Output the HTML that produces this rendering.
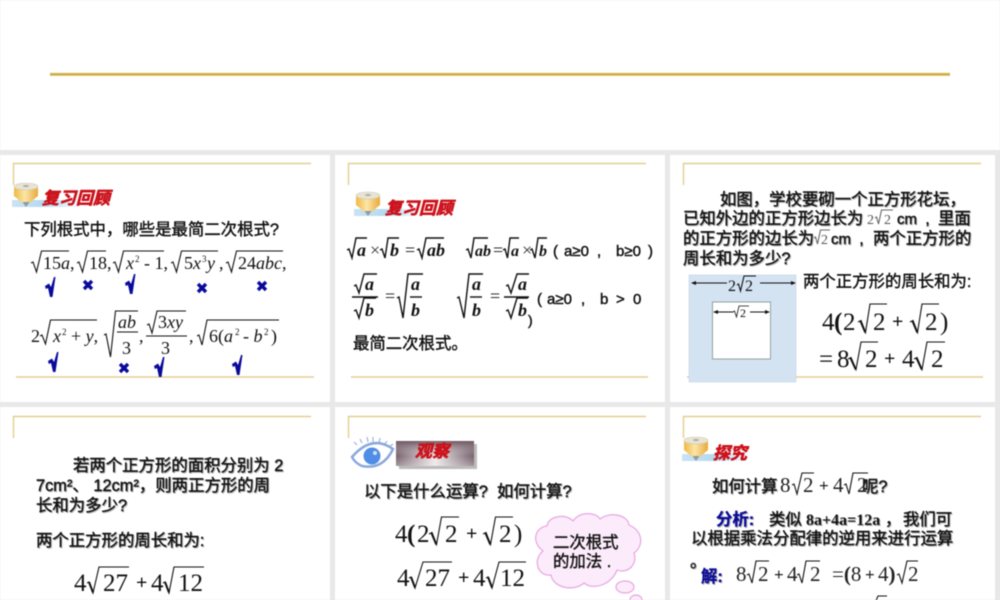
<!DOCTYPE html>
<html lang="zh">
<head>
<meta charset="utf-8">
<title>二次根式</title>
<style>
html,body{margin:0;padding:0;background:#e8e8e8;width:1000px;height:600px;overflow:hidden}
svg{display:block;filter:blur(.4px)}
text{white-space:pre}
.t{font:16.4px "Liberation Sans","Noto Sans CJK SC",sans-serif;fill:#111;stroke:#111;stroke-width:.4}
.l{font:15px "Liberation Sans",sans-serif;fill:#111;stroke:#111;stroke-width:.45}
.sh{filter:drop-shadow(1px 1px 0 #b5b5b5)}
.m{font:18px "Liberation Serif",serif;fill:#111}
.mi{font:italic 18px "Liberation Serif",serif;fill:#111}
.bi{font:italic bold 18px "Liberation Serif",serif;fill:#111}
.b{font:25px "Liberation Serif",serif;fill:#111}
.p{font:bold 20px "Liberation Serif",serif;fill:#111}
.p2{font:bold 17px "Liberation Serif",serif;fill:#222}
.s{font:italic 9px "Liberation Serif",serif;fill:#111}
.m20{font:21px "Liberation Serif",serif;fill:#222}
.r{fill:none;stroke:#111;stroke-width:1.1}
.rb{fill:none;stroke:#111;stroke-width:1.4}
.f{fill:none;stroke:#e4cd90;stroke-width:1.4}
.h{font:italic bold 17px "Liberation Sans","Noto Sans CJK SC",sans-serif;fill:#d0101a;stroke:#d0101a;stroke-width:.45;filter:drop-shadow(.8px .8px 0 #8a2025)}
.n{font:bold 16.4px "Liberation Sans","Noto Sans CJK SC",sans-serif;fill:#0a0a96;stroke:#0a0a96;stroke-width:.3}
.ck{fill:#0a0a9a}
.x{stroke:#0a0a9a;stroke-width:3.4;fill:none}
</style>
</head>
<body>
<svg width="1000" height="600" viewBox="0 0 1000 600" xmlns="http://www.w3.org/2000/svg">
<defs>
<linearGradient id="gold" x1="0" x2="1" y1="0" y2="0"><stop offset="0" stop-color="#f0b840"/><stop offset=".45" stop-color="#fbe6a8"/><stop offset="1" stop-color="#e9a93a"/></linearGradient>
<linearGradient id="sky" x1="0" x2="1" y1="0" y2="0"><stop offset="0" stop-color="#c9e3f4"/><stop offset=".5" stop-color="#b5d9f0"/><stop offset="1" stop-color="#f4fafd"/></linearGradient>
<linearGradient id="bx" x1="0" x2="1" y1="0" y2="0"><stop offset="0" stop-color="#5f4450"/><stop offset=".5" stop-color="#f6f3f4"/><stop offset="1" stop-color="#5f4450"/></linearGradient>
<linearGradient id="bxv" x1="0" x2="0" y1="0" y2="1"><stop offset="0" stop-color="#6d5560"/><stop offset=".6" stop-color="#d9d4d6" stop-opacity=".2"/><stop offset="1" stop-color="#e8e4e6" stop-opacity=".5"/></linearGradient>
<g id="pencil">
<rect x="-2" y="17" width="65" height="7" fill="url(#sky)"/>
<path d="M0 4 H24 V13 L12 23 L0 13 Z" fill="url(#gold)"/>
<ellipse cx="12" cy="3.5" rx="12" ry="3.5" fill="#e8e4d4" stroke="#cfc9b0" stroke-width=".6"/>
<ellipse cx="12" cy="3" rx="3" ry="1" fill="#aaa"/>
<path d="M8.5 19 H15.5 L12 24 Z" fill="#8a9aa6"/>
</g>
</defs>

<rect width="1000" height="600" fill="#e8e8e8"/>
<rect width="1000" height="150" fill="#fff"/>
<rect x="50" y="72.7" width="900" height="3.3" fill="#e6cf85"/>
<rect x="50" y="73.5" width="900" height="1.6" fill="#c6a63a"/>

<!-- panels -->
<rect x="0" y="155" width="330" height="247" fill="#fff"/>
<rect x="335" y="155" width="330" height="247" fill="#fff"/>
<rect x="670" y="155" width="325" height="247" fill="#fff"/>
<rect x="0" y="407" width="330" height="193" fill="#fff"/>
<rect x="335" y="407" width="330" height="193" fill="#fff"/>
<rect x="670" y="407" width="325" height="193" fill="#fff"/>

<!-- frames -->
<path class="f" d="M13.5 185 V163.500 H311 M16 377 H314"/>
<path class="f" d="M348.500 185 V163.500 H646 M351 377 H648"/>
<path class="f" d="M683.500 185 V163.500 H981 M687 377 H983"/>
<path class="f" d="M13.500 438 V416.500 H311"/>
<path class="f" d="M348.500 438 V416.500 H646"/>
<path class="f" d="M683.500 438 V416.500 H981"/>

<!-- PANEL 1 -->
<use href="#pencil" x="14" y="183"/>
<text class="h" x="42" y="204">复习回顾</text>
<text class="t" x="24" y="235">下列根式中，哪些是最简二次根式?</text>

<path class="r" d="M31 263 l2 -1 l3.500 10 l5 -21 H69"/>
<text class="m" x="43" y="269">15<tspan class="mi">a</tspan>,</text>
<path class="r" d="M77 263 l2 -1 l3.500 10 l5 -21 H106"/>
<text class="m" x="89" y="269">18,</text>
<path class="r" d="M113 263 l2 -1 l3.500 10 l5 -21 H164"/>
<text class="mi" x="126" y="269">x</text><text class="s" x="135" y="262" style="font-style:normal">2</text><text class="m" x="144" y="269">- 1,</text>
<path class="r" d="M171 263 l2 -1 l3.500 10 l5 -21 H218"/>
<text class="m" x="184" y="269">5<tspan class="mi">x</tspan></text><text class="s" x="202" y="262" style="font-style:normal">3</text><text class="mi" x="207" y="269">y</text><text class="m" x="219" y="269">,</text>
<path class="r" d="M226 263 l2 -1 l3.500 10 l5 -21 H283"/>
<text class="m" x="238" y="269">24<tspan class="mi">abc</tspan>,</text>

<path class="ck" d="M45 286 l4 -2.500 l2 3.500 l3 -10 h1.500 l-3 20 h-2.500 l-2 -9 l-2.200 1z"/>
<path class="x" d="M84 281 l8 8 M92 281 l-8 8"/>
<path class="ck" d="M125 283 l4 -2.500 l2 3.500 l3 -10 h1.500 l-3 20 h-2.500 l-2 -9 l-2.200 1z"/>
<path class="x" d="M198 284 l8 8 M206 284 l-8 8"/>
<path class="x" d="M258 282 l8 8 M266 282 l-8 8"/>

<text class="m" x="31" y="342">2</text>
<path class="r" d="M40 336 l2 -1 l3.500 9 l5 -24 H97"/>
<text class="mi" x="53" y="342">x</text><text class="s" x="62" y="335" style="font-style:normal">2</text><text class="m" x="71" y="342">+ <tspan class="mi">y</tspan>,</text>
<path class="r" d="M104 335 l2 -1 l4.500 23 l5 -46 H138"/>
<text class="mi" x="118" y="328">ab</text><path class="r" d="M117 332 H138"/><text class="m" x="122" y="354">3</text>
<text class="m" x="139" y="342">,</text>
<path class="r" d="M146 336 H187"/>
<path class="r" d="M147 325 l2 -1 l3 9 l5 -22 H186"/>
<text class="m" x="158" y="328">3<tspan class="mi">xy</tspan></text><text class="m" x="161" y="354">3</text>
<text class="m" x="189" y="342">,</text>
<path class="r" d="M197 336 l2 -1 l3 10 l5 -25 H279"/>
<text class="m" x="209" y="342">6(<tspan class="mi">a</tspan></text><text class="s" x="235" y="335" style="font-style:normal">2</text><text class="m" x="243" y="342">- <tspan class="mi">b</tspan></text><text class="s" x="264" y="335" style="font-style:normal">2</text><text class="m" x="271" y="342">)</text>

<path class="ck" d="M48 361 l4 -2.500 l2 3.500 l3 -10 h1.500 l-3 20 h-2.500 l-2 -9 l-2.200 1z"/>
<path class="x" d="M120 364 l8 8 M128 364 l-8 8"/>
<path class="ck" d="M154 366 l4 -2.500 l2 3.500 l3 -10 h1.500 l-3 20 h-2.500 l-2 -9 l-2.200 1z"/>
<path class="ck" d="M232 364 l4 -2.500 l2 3.500 l3 -10 h1.500 l-3 20 h-2.500 l-2 -9 l-2.200 1z"/>

<!-- PANEL 2 -->
<use href="#pencil" x="356" y="192"/>
<text class="h" x="385" y="214">复习回顾</text>

<path class="rb" d="M347 250 l2 -1 l3 9 l4 -20 H367"/>
<text class="bi" x="357" y="256">a</text>
<text class="m" x="370" y="256" style="fill:#333">×</text>
<path class="rb" d="M380 250 l2 -1 l3 9 l3 -20 H399"/>
<text class="bi" x="390" y="256">b</text>
<text class="m" x="405" y="256">=</text>
<path class="rb" d="M417 250 l2 -1 l3 9 l4 -20 H444"/>
<text class="bi" x="427" y="256">ab</text>

<path class="rb" d="M466 250 l2 -1 l3 9 l3 -20 H488"/>
<text class="bi" x="475" y="256" style="font-size:16px">ab</text>
<text class="m" x="493" y="256">=</text>
<path class="rb" d="M503 250 l2 -1 l2.500 9 l2.500 -20 H519"/>
<text class="bi" x="511" y="256" style="font-size:16px">a</text>
<text class="m" x="522" y="256" style="fill:#333">×</text>
<path class="rb" d="M530 250 l2 -1 l3 9 l3 -20 H547"/>
<text class="bi" x="539" y="256" style="font-size:16px">b</text>
<text class="l" x="553" y="256">(</text><text class="l" x="564" y="256">a≥0</text><text class="l" x="597" y="256">,</text><text class="l" x="616" y="256">b≥0</text><text class="l" x="648" y="256">)</text>

<path class="rb" d="M352 297 H378"/>
<path class="rb" d="M354 286 l2 -1 l3 8 l5 -19 H377"/>
<text class="bi" x="365" y="290">a</text>
<path class="rb" d="M354 311 l2 -1 l3 8 l5 -20 H376"/>
<text class="bi" x="365" y="316">b</text>
<text class="m" x="385" y="302">=</text>
<path class="rb" d="M397 298 l2 -1 l4 21 l5 -44 H423"/>
<text class="bi" x="411" y="290">a</text><path class="rb" d="M410 297 H422"/><text class="bi" x="411" y="316">b</text>

<path class="rb" d="M457 298 l2 -1 l5 21 l5 -44 H483"/>
<text class="bi" x="472" y="290">a</text><path class="rb" d="M470 297 H482"/><text class="bi" x="472" y="316">b</text>
<text class="m" x="490" y="302">=</text>
<path class="rb" d="M504 297 H529"/>
<path class="rb" d="M506 286 l2 -1 l3 8 l6 -19 H529"/>
<text class="bi" x="518" y="290">a</text>
<path class="rb" d="M506 311 l2 -1 l3 8 l6 -20 H528"/>
<text class="bi" x="518" y="316">b</text>
<text class="l" x="528" y="325" style="font-size:14px">)</text>
<text class="l" x="537" y="304">(</text><text class="l" x="547" y="304">a≥0</text><text class="l" x="581" y="304">,</text><text class="l" x="600" y="304">b</text><text class="l" x="616" y="304">&gt;</text><text class="l" x="633" y="304">0</text>
<text class="t" x="353" y="349">最简二次根式。</text>

<!-- PANEL 3 -->
<g class="sh">
<text class="t" x="720" y="205">如图，学校要砌一个正方形花坛，</text>
<text class="t" x="683" y="224">已知外边的正方形边长为</text>
<text class="l" x="897" y="224">cm  ,</text>
<text class="t" x="938" y="224">里面</text>
<text class="t" x="683" y="244">的正方形的边长为</text>
<text class="l" x="831" y="244">cm  ,</text>
<text class="t" x="873" y="244">两个正方形的</text>
<text class="t" x="683" y="264">周长和为多少?</text>
</g>
<text class="m" x="867" y="224" style="font-size:14px;fill:#555">2</text>
<path class="r" style="stroke:#666" d="M875 218 l1.500 -1 l2 7 l3 -14 H893"/>
<text class="m" x="884" y="224" style="font-size:14px;fill:#555">2</text>
<path class="r" style="stroke:#666" d="M814 238 l1.500 -1 l2 7 l3 -14 H830"/>
<text class="m" x="821" y="244" style="font-size:14px;fill:#555">2</text>

<rect x="689" y="275" width="107" height="107" fill="#d4e3f2" stroke="#bcd0e4" stroke-width=".5"/>
<rect x="712.500" y="302" width="58" height="57" fill="#fff" stroke="#7d8f8a" stroke-width=".8"/>
<path d="M692 283 H727 M760 283 H795 M714 312 H733 M750 312 H769" stroke="#111" stroke-width="1" fill="none"/>
<path d="M691 283 l5 -2 v4z M796 283 l-5 -2 v4z M713 312 l5 -2 v4z M770 312 l-5 -2 v4z" fill="#111"/>
<text class="m" x="728" y="291" style="font-size:16px">2</text>
<path class="r" d="M737 285 l1.500 -1 l2 7 l3.500 -15 H756"/>
<text class="m" x="745" y="291" style="font-size:16px">2</text>
<path class="r" style="stroke-width:.8" d="M733 312 l1.500 -1 l2 6 l2.500 -11 H749"/>
<text class="m" x="740" y="317" style="font-size:12px">2</text>

<text class="t" x="803" y="287">两个正方形的周长和为:</text>

<text class="b" x="822" y="330">4</text><text class="b" x="834" y="330" style="font-weight:bold">(</text>
<text class="b" x="843" y="330">2</text>
<path class="r" d="M858 322 l3 -1.500 l4.500 12 l4.500 -28.500 H887"/><path d="M860.500 321 l4.800 11.500" stroke="#111" stroke-width="2"/>
<text class="b" x="873" y="330">2</text>
<text class="p" x="892" y="328">+</text>
<path class="r" d="M910 322 l3 -1.500 l4.500 12 l4.500 -28.500 H939"/><path d="M912.500 321 l4.800 11.500" stroke="#111" stroke-width="2"/>
<text class="b" x="925" y="330">2</text>
<text class="b" x="940" y="330">)</text>
<text class="b" x="819" y="367">=</text><text class="b" x="837" y="367">8</text>
<path class="r" d="M848 359 l3 -1.500 l5 12 l5 -27.500 H878"/><path d="M850.500 358 l5.300 11.500" stroke="#111" stroke-width="2"/>
<text class="b" x="865" y="367">2</text>
<text class="p" x="884" y="365">+</text>
<text class="b" x="902" y="367">4</text>
<path class="r" d="M914 359 l3 -1.500 l5 12 l5 -27.500 H945"/><path d="M916.500 358 l5.300 11.500" stroke="#111" stroke-width="2"/>
<text class="b" x="931" y="367">2</text>

<!-- PANEL 4 -->
<g class="sh">
<text class="t" x="73" y="471">若两个正方形的面积分别为 2</text>
<text class="t" x="36" y="491">7cm²、 12cm²，则两正方形的周</text>
<text class="t" x="36" y="511">长和为多少?</text>
<text class="t" x="36" y="546">两个正方形的周长和为:</text>
</g>
<text class="b" x="74" y="591">4</text>
<path class="r" d="M87 583 l2 -1 l4 11 l6 -26 H129"/><path d="M89 582 l4 10.500" stroke="#111" stroke-width="2"/>
<text class="b" x="103" y="591">27</text>
<text class="p" x="136" y="589">+</text>
<text class="b" x="151" y="591">4</text>
<path class="r" d="M163 583 l2 -1 l4 11 l5 -26 H204"/><path d="M165 582 l4 10.500" stroke="#111" stroke-width="2"/>
<text class="b" x="178" y="591">12</text>

<!-- PANEL 5 -->
<g fill="none" stroke="#9db3dd" stroke-width="1.200">
<path d="M357 445 l-3 -3 M362 443 l-2 -4 M368 442 l-1 -5 M373 442 v-5 M379 443 l1 -5 M384 445 l3 -4 M389 447 l4 -3"/>
</g>
<path d="M352 457 Q372 434 393 449 Q383 470 362 466 Q355 463 352 457Z" fill="#fff" stroke="#8ba8dc" stroke-width="2.500"/>
<circle cx="372" cy="456" r="8.500" fill="#4f8de6"/>
<circle cx="375" cy="453" r="2" fill="#cfe0f8"/>
<rect x="399" y="444" width="78" height="25" fill="#bbb"/>
<rect x="396" y="441" width="78" height="25" fill="url(#bx)"/>
<rect x="396" y="441" width="78" height="25" fill="url(#bxv)"/>
<text class="h" x="415" y="457">观察</text>
<g class="sh"><text class="t" x="364" y="497">以下是什么运算?  如何计算?</text></g>

<text class="b" x="395" y="542">4</text><text class="b" x="407" y="542" style="font-weight:bold">(</text>
<text class="b" x="417" y="542">2</text>
<path class="r" d="M429 534 l3 -1.500 l4.500 12 l5 -27.500 H459"/><path d="M431.500 533 l4.800 11.500" stroke="#111" stroke-width="2"/>
<text class="b" x="445" y="542">2</text>
<text class="p" x="466" y="540">+</text>
<path class="r" d="M483 534 l3 -1.500 l4.500 12 l5 -27.500 H513"/><path d="M485.500 533 l4.800 11.500" stroke="#111" stroke-width="2"/>
<text class="b" x="499" y="542">2</text>
<text class="b" x="514" y="542">)</text>
<text class="b" x="397" y="586">4</text>
<path class="r" d="M409 578 l2 -1 l4 11 l8 -26 H452"/><path d="M411 577 l4 10.500" stroke="#111" stroke-width="2"/>
<text class="b" x="425" y="586">27</text>
<text class="p" x="458" y="584">+</text>
<text class="b" x="473" y="586">4</text>
<path class="r" d="M486 578 l2 -1 l4 11 l7 -26 H526"/><path d="M488 577 l4 10.500" stroke="#111" stroke-width="2"/>
<text class="b" x="500" y="586">12</text>

<path d="M543 551 C530 541 536 527 547 526 C548 516 566 513 573 521 C580 511 596 512 600 519 C610 511 628 515 629 525 C642 530 645 545 634 553 C638 565 627 574 617 570 C612 584 594 591 584 583 C574 592 553 588 551 575 C538 577 532 560 543 551Z" fill="#fcecfb" stroke="#e6a6e2" stroke-width="1.200"/>
<ellipse cx="625" cy="587" rx="9" ry="6" fill="#fcecfb" stroke="#e6a6e2" stroke-width="1.200"/>
<ellipse cx="636" cy="600" rx="6" ry="5" fill="#fcecfb" stroke="#e6a6e2" stroke-width="1.200"/>
<text class="t" x="553" y="548">二次根式</text>
<text class="t" x="553" y="567">的加法 .</text>

<!-- PANEL 6 -->
<use href="#pencil" x="684" y="437"/>
<text class="h" x="713" y="459">探究</text>

<g class="sh">
<text class="t" x="712" y="492">如何计算</text>
<text class="t" x="862" y="492">呢?</text>
<text class="n" x="716" y="525">分析:</text>
<text class="t" x="769" y="525">类似</text>
<text class="m" x="806" y="525" style="font-weight:bold;font-size:16px">8a+4a=12a</text>
<text class="t" x="885" y="525">，</text>
<text class="t" x="903" y="525">我们可</text>
<text class="t" x="691" y="544">以根据乘法分配律的逆用来进行运算</text>
<text class="t" x="690" y="567">。</text>
<text class="n" x="701" y="582">解:</text>
</g>
<text class="m20" x="780" y="492">8</text>
<path class="r" d="M792 485 l2 -1 l3 10 l5 -21 H814"/>
<text class="m20" x="803" y="492">2</text>
<text class="p2" x="819" y="491">+</text>
<text class="m20" x="833" y="492">4</text>
<path class="r" d="M844 485 l2 -1 l3 10 l4 -21 H868"/>
<text class="m20" x="857" y="492">2</text>

<text class="m20" x="736" y="581">8</text>
<path class="r" d="M747 575 l2 -1 l3 9 l4 -22 H769"/>
<text class="m20" x="758" y="581">2</text>
<text class="p2" x="774" y="580">+</text>
<text class="m20" x="787" y="581">4</text>
<path class="r" d="M797 575 l2 -1 l3 9 l4 -22 H820"/>
<text class="m20" x="810" y="581">2</text>
<text class="m20" x="832" y="581">=<tspan style="font-weight:bold">(</tspan>8</text>
<text class="p2" x="865" y="580">+</text>
<text class="m20" x="878" y="581">4<tspan style="font-weight:bold">)</tspan></text>
<path class="r" d="M897 575 l2 -1 l3 9 l5 -22 H918"/>
<text class="m20" x="908" y="581">2</text>
<path class="r" d="M873 604 l2 -1 l3 -7 H887"/>
</svg>
</body>
</html>
